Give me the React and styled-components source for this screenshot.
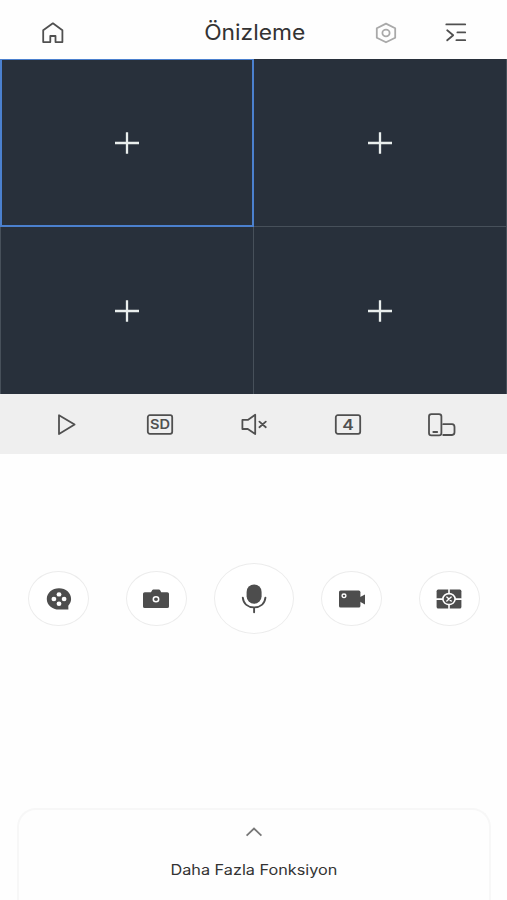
import React from 'react'
import styled, { createGlobalStyle } from 'styled-components'

const GlobalStyle = createGlobalStyle`
    * {
        box-sizing: border-box;
    }

    body {
        margin: 0;
        background: #fefefe;
        font-family: Inter, "Liberation Sans", sans-serif;
        color: #333;
    }
`;

function HomeIcon() {
    return (
        <Icon width="24" height="24" viewBox="0 0 24 24">
            <path d="M2.2 9.2 11.9 2.3 21.4 9.2V21.1H14.5V15H9.3V21.1H2.2Z" />
        </Icon>
    )
}

function SettingsIcon() {
    return (
        <Icon width="24" height="24" viewBox="0 0 24 24" $color="#a9a9a9">
            <path d="M12 2.6 21.2 7.3V16.7L12 21.3 2.8 16.7V7.3Z" />
            <ellipse cx="12" cy="12" rx="3.6" ry="3.3" />
        </Icon>
    )
}

function MenuIcon() {
    return (
        <Icon width="24" height="24" viewBox="0 0 24 24">
            <path d="M2.3 3.4H21.2M13.4 11.4H21.2M12.4 19.2H21.2M3.2 9.3 9.2 14.2 3.2 19.3" />
        </Icon>
    )
}

function PlayIcon() {
    return (
        <Icon width="30" height="26" viewBox="0 0 30 26">
            <path d="M8 4.2V23L23.6 13.6Z" />
        </Icon>
    )
}

function BoxedIcon({ label, size, width }) {
    return (
        <Icon width="30" height="26" viewBox="0 0 30 26">
            <rect x="2.8" y="4.2" width="24.4" height="18.6" rx="2" />
            <IconText
                x={15 - width / 2}
                y={13.5 + size * 0.365}
                fontSize={size}
                textLength={width}
                lengthAdjust="spacingAndGlyphs"
            >
                {label}
            </IconText>
        </Icon>
    )
}

function MuteIcon() {
    return (
        <Icon width="30" height="26" viewBox="0 0 30 26">
            <path d="M3.4 8.9H8.8L16.2 3.8V23L8.8 18H3.4Z" />
            <path d="M20.4 10.6 26.8 16.2M26.8 10.6 20.4 16.2" />
        </Icon>
    )
}

function RotateIcon() {
    return (
        <Icon width="30" height="26" viewBox="0 0 30 26">
            <rect x="2" y="3.1" width="12.4" height="21.2" rx="2.4" />
            <path d="M6.3 21H10.2" />
            <path d="M16.2 13.2H25Q27.5 13.4 27.5 16V21.2Q27.5 23.8 25 24H16.2" />
        </Icon>
    )
}

function ReelIcon() {
    return (
        <Icon width="26" height="24" viewBox="0 0 26 24" $solid>
            <path d="M13 1.3C19.8 1.3 25.1 6 25.1 12C25.1 14.6 23.8 17 22.3 18.8L22.4 22.6H13C6.2 22.6.8 18 .8 12S6.2 1.3 13 1.3Z" />
            <g fill="#fff">
                <ellipse cx="13" cy="7.4" rx="2.4" ry="2.2" />
                <ellipse cx="7.9" cy="12" rx="2.4" ry="2.2" />
                <ellipse cx="18.1" cy="12" rx="2.4" ry="2.2" />
                <ellipse cx="13" cy="16.8" rx="2.4" ry="2.2" />
            </g>
        </Icon>
    )
}

function CameraIcon() {
    return (
        <Icon width="26" height="24" viewBox="0 0 26 24" $solid>
            <path d="M1.8 5.2H8L9.3 3Q9.6 2.6 10.2 2.6H16Q16.6 2.6 17 3L18.2 5.2H24.2Q26 5.2 26 6.8V19.4Q26 21 24.2 21H1.8Q0 21 0 19.4V6.8Q0 5.2 1.8 5.2Z" />
            <ellipse cx="13" cy="12.3" rx="2.7" ry="2.5" stroke="#fff" strokeWidth="1.5" />
        </Icon>
    )
}

function MicIcon() {
    return (
        <Icon width="28" height="32" viewBox="0 0 28 32" $solid>
            <rect x="6.6" y="1.4" width="15" height="19.4" rx="7.5" />
            <path d="M2.8 14.6C3.4 20.8 8 24.4 14.1 24.4S24.8 20.8 25.4 14.6M14.1 24.4V29.2" fill="none" stroke="#4d4d4d" strokeWidth="1.9" />
        </Icon>
    )
}

function VideoIcon() {
    return (
        <Icon width="28" height="24" viewBox="0 0 28 24" $solid>
            <rect x="1" y="3.6" width="21.4" height="17" rx="1.6" />
            <path d="M21.6 10.3 27 7.4V17.4L21.6 14.6Z" />
            <ellipse cx="6" cy="8.8" rx="1.9" ry="1.8" stroke="#fff" strokeWidth="1.3" />
        </Icon>
    )
}

function FisheyeIcon() {
    return (
        <Icon width="26" height="24" viewBox="0 0 26 24" $solid>
            <rect x="0.6" y="2.6" width="24.8" height="19" rx="1.6" />
            <path d="M13 2.6V21.6M.6 12.1H25.4" stroke="#fff" strokeWidth="1.6" />
            <ellipse cx="13" cy="12.1" rx="6.1" ry="5.5" fill="#4d4d4d" stroke="#fff" strokeWidth="1.6" />
            <path d="M10.8 10.1 15.2 14.1M15.2 10.1 10.8 14.1" stroke="#fff" strokeWidth="1.4" />
        </Icon>
    )
}

const tools = [
    { name: 'play', icon: <PlayIcon /> },
    { name: 'quality', icon: <BoxedIcon label="SD" size={12.8} width={20} /> },
    { name: 'sound', icon: <MuteIcon /> },
    { name: 'split', icon: <BoxedIcon label="4" size={15} width={11.6} /> },
    { name: 'rotate', icon: <RotateIcon /> },
]

const actions = [
    { name: 'playback', icon: <ReelIcon /> },
    { name: 'snapshot', icon: <CameraIcon /> },
    { name: 'talk', icon: <MicIcon />, large: true },
    { name: 'record', icon: <VideoIcon /> },
    { name: 'fisheye', icon: <FisheyeIcon /> },
]

function App() {
    return (
        <Screen>
            <GlobalStyle />
            <Header>
                <HomeIcon />
                <Title>Önizleme</Title>
                <HeaderActions>
                    <SettingsIcon />
                    <MenuIcon />
                </HeaderActions>
            </Header>
            <VideoGrid>
                {[0, 1, 2, 3].map(i => (
                    <VideoCell key={i} $active={i === 0}>
                        <svg width="24" height="24" viewBox="0 0 24 24" stroke="#e9eeed" strokeWidth="2.3">
                            <path d="M0 12H24M12 1.2V22.8" />
                        </svg>
                    </VideoCell>
                ))}
            </VideoGrid>
            <Toolbar>
                {tools.map(tool => <ToolButton key={tool.name}>{tool.icon}</ToolButton>)}
            </Toolbar>
            <Actions>
                {actions.map(action => (
                    <RoundButton key={action.name} $large={action.large}>{action.icon}</RoundButton>
                ))}
            </Actions>
            <Drawer>
                <svg width="18" height="12" viewBox="0 0 18 12" fill="none" stroke="#777" strokeWidth="1.8">
                    <path d="M1.6 9.6 9 2.6 16.4 9.6" />
                </svg>
                <DrawerLabel>Daha Fazla Fonksiyon</DrawerLabel>
            </Drawer>
        </Screen>
    )
}

const Screen = styled.div`
    display: flex;
    flex-direction: column;
    width: 507px;
    height: 900px;
    overflow: hidden;
`;

const Header = styled.header`
    display: grid;
    grid-template-columns: 1fr auto 1fr;
    align-items: center;
    height: 59px;
    padding: 7px 39px 0 41px;
`;

const Title = styled.h1`
    margin: 0;
    padding-bottom: 2px;
    font-size: 21.5px;
    font-weight: 400;
    line-height: 28px;
    transform: scaleX(1.06);
`;

const HeaderActions = styled.div`
    display: flex;
    justify-content: flex-end;
    gap: 46px;
`;

const Icon = styled.svg`
    display: block;
    flex: none;
    fill: ${p => p.$solid ? '#4d4d4d' : 'none'};
    stroke: ${p => p.$solid ? 'none' : p.$color || '#505050'};
    stroke-width: 1.8;
    stroke-linejoin: round;
    stroke-linecap: round;
`;

const IconText = styled.text`
    fill: #505050;
    stroke: none;
    font-weight: 600;
`;

const VideoGrid = styled.div`
    display: grid;
    grid-template-columns: 254px 253px;
    grid-template-rows: 168px 167px;
    background: #28303b;
`;

const VideoCell = styled.div`
    display: flex;
    align-items: center;
    justify-content: center;
    border: 0 solid #47505a;
    border-width: 0 1px 1px 0;

    &:nth-child(3) {
        border-left-width: 1px;
    }

    &:nth-child(n + 3) {
        padding-top: 1px;
        border-bottom-width: 0;
    }

    ${p => p.$active && `
        border: 2px solid #4b80ce;
        border-top-width: 1px;
    `}
`;

const Toolbar = styled.div`
    display: grid;
    grid-template-columns: repeat(5, 94.2px);
    align-items: center;
    height: 60px;
    padding-left: 18.5px;
    background: #efefef;
`;

const ToolButton = styled.div`
    display: flex;
    justify-content: center;
`;

const Actions = styled.div`
    display: grid;
    grid-template-columns: repeat(5, 97.7px);
    align-items: center;
    justify-items: center;
    height: 71px;
    margin-top: 109px;
    padding-left: 9.8px;
`;

const RoundButton = styled.div`
    display: flex;
    align-items: center;
    justify-content: center;
    width: ${p => p.$large ? 80 : 61}px;
    height: ${p => p.$large ? 71 : 55}px;
    border: 1px solid #ececec;
    border-radius: 50%;
    background: #fff;
`;

const Drawer = styled.div`
    display: flex;
    flex-direction: column;
    align-items: center;
    height: 92px;
    margin: auto 16px 0 17px;
    padding-top: 16px;
    border: 2px solid #f7f7f7;
    border-bottom: 0;
    border-radius: 19px 19px 0 0;
`;

const DrawerLabel = styled.span`
    margin-top: 22px;
    font-size: 14px;
    font-weight: 400;
    line-height: 20px;
    white-space: nowrap;
    color: #333;
    transform: scaleX(1.16);
`;

export default App
